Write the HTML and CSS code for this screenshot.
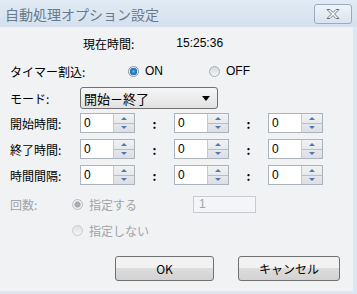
FILE: index.html
```html
<!DOCTYPE html>
<html lang="ja">
<head>
    <meta charset="UTF-8">
    <title>自動処理オプション設定</title>
    <link rel="stylesheet" href="styles.css">
</head>
<body>
    <div class="frame">
        <div class="titlebar">
            <span class="title">自動処理オプション設定</span>
            <button class="close">
                <svg width="16" height="12" viewBox="0 0 16 12">
                    <path d="M2 1.5h3l3 3 3-3h3l-4.5 4.5 4.5 4.5h-3l-3-3-3 3h-3l4.5-4.5z" fill="#fff" stroke="#6b7683" stroke-width="1"/>
                </svg>
            </button>
        </div>
        <div class="content">
            <div class="row now-row">
                <span class="now-label">現在時間:</span>
                <span class="now-time">15:25:36</span>
            </div>
            <div class="row timer-row">
                <span class="label">タイマー割込:</span>
                <span class="radio on"></span><span class="radio-text">ON</span>
                <span class="radio off second"></span><span class="radio-text">OFF</span>
            </div>
            <div class="row mode-row">
                <span class="label">モード:</span>
                <div class="select">
                    <span>開始－終了</span>
                    <span class="arrow"></span>
                </div>
            </div>
            <div class="row spin-row">
                <span class="label">開始時間:</span>
                <div class="spin"><span class="val">0</span><span class="btns"><span class="up"></span><span class="down"></span></span></div>
                <span class="colon">:</span>
                <div class="spin"><span class="val">0</span><span class="btns"><span class="up"></span><span class="down"></span></span></div>
                <span class="colon">:</span>
                <div class="spin"><span class="val">0</span><span class="btns"><span class="up"></span><span class="down"></span></span></div>
            </div>
            <div class="row spin-row">
                <span class="label">終了時間:</span>
                <div class="spin"><span class="val">0</span><span class="btns"><span class="up"></span><span class="down"></span></span></div>
                <span class="colon">:</span>
                <div class="spin"><span class="val">0</span><span class="btns"><span class="up"></span><span class="down"></span></span></div>
                <span class="colon">:</span>
                <div class="spin"><span class="val">0</span><span class="btns"><span class="up"></span><span class="down"></span></span></div>
            </div>
            <div class="row spin-row">
                <span class="label">時間間隔:</span>
                <div class="spin"><span class="val">0</span><span class="btns"><span class="up"></span><span class="down"></span></span></div>
                <span class="colon">:</span>
                <div class="spin"><span class="val">0</span><span class="btns"><span class="up"></span><span class="down"></span></span></div>
                <span class="colon">:</span>
                <div class="spin"><span class="val">0</span><span class="btns"><span class="up"></span><span class="down"></span></span></div>
            </div>
            <div class="row count-row disabled">
                <span class="count-label">回数:</span>
                <span class="radio dis-on"></span><span class="radio-text">指定する</span>
                <div class="count-box">1</div>
            </div>
            <div class="row nocount-row disabled">
                <span class="radio dis-off"></span><span class="radio-text">指定しない</span>
            </div>
            <div class="row button-row">
                <button class="btn ok">OK</button>
                <button class="btn cancel">キャンセル</button>
            </div>
        </div>
    </div>
</body>
</html>
```

FILE: styles.css
```css
body {
    margin: 0;
    width: 357px;
    height: 294px;
    overflow: hidden;
    background: #dce7f3;
    font-family: "Noto Sans CJK JP", "DejaVu Sans", sans-serif;
    font-size: 12px;
    color: #000;
}
.frame {
    width: 357px;
    height: 294px;
}
.titlebar {
    height: 27px;
    display: flex;
    align-items: center;
    justify-content: space-between;
    background: linear-gradient(#e2ebf5, #d4e0ee);
    padding: 0 5px 0 5px;
    box-sizing: border-box;
}
.title {
    font-size: 14px;
    color: #6a7a8a;
}
.close {
    width: 38px;
    height: 20px;
    margin-top: 1px;
    border: 1px solid #9aabbf;
    border-radius: 3px;
    background: linear-gradient(#eef3f9, #dae4ef);
    display: flex;
    align-items: center;
    justify-content: center;
    padding: 0;
}
.content {
    width: 353px;
    height: 264px;
    background: #f1f2f4;
    box-sizing: border-box;
    padding-top: 7px;
}
.row {
    display: flex;
    align-items: center;
}
.label {
    width: 70px;
    padding-left: 10px;
    white-space: nowrap;
}
.now-row {
    height: 18px;
}
.now-label {
    margin-left: 83px;
}
.now-time {
    margin-left: 42px;
    font-family: "Liberation Sans", sans-serif;
}
.timer-row {
    height: 18px;
    margin-top: 10px;
}
.radio {
    width: 11px;
    height: 11px;
    border-radius: 50%;
    box-sizing: border-box;
    display: inline-block;
}
.timer-row .radio.on {
    margin-left: 48px;
}
.radio.on {
    border: 1px solid #8a95a3;
    background: radial-gradient(circle, #5fc2f0 0, #1f6fb8 2.5px, #2a7cc2 3.5px, #e8ecf0 4px);
}
.radio.off {
    border: 1px solid #a6aeb8;
    background: linear-gradient(#d4d8dd, #f4f5f7);
}
.radio.second {
    margin-left: 46px;
}
.radio-text {
    margin-left: 6px;
    font-family: "Liberation Sans", "Noto Sans CJK JP", sans-serif;
}
.mode-row {
    height: 22px;
    margin-top: 7px;
}
.select {
    width: 138px;
    height: 22px;
    box-sizing: border-box;
    border: 1px solid #707070;
    border-radius: 3px;
    background: linear-gradient(#f6f6f6, #e2e2e2);
    display: flex;
    align-items: center;
    justify-content: space-between;
    padding: 0 7px 0 3px;
    font-size: 13px;
}
.arrow {
    width: 0;
    height: 0;
    border-left: 4px solid transparent;
    border-right: 4px solid transparent;
    border-top: 5px solid #000;
}
.spin-row {
    height: 20px;
    margin-top: 6px;
}
.mode-row + .spin-row {
    margin-top: 4px;
}
.spin {
    width: 55px;
    height: 20px;
    box-sizing: border-box;
    border: 1px solid #abb3bd;
    background: #fff;
    display: flex;
}
.val {
    flex: 1;
    padding-left: 3px;
    line-height: 18px;
    font-family: "Liberation Sans", sans-serif;
}
.btns {
    width: 20px;
    display: flex;
    flex-direction: column;
    border-left: 1px solid #c4cad1;
    background: linear-gradient(#f1f2f4, #dcdfe3);
}
.btns span {
    flex: 1;
    display: flex;
    align-items: center;
    justify-content: center;
}
.up::after, .down::after {
    content: "";
    border-left: 3px solid transparent;
    border-right: 3px solid transparent;
}
.up {
    border-bottom: 1px solid #b8bec6;
}
.up::after {
    border-bottom: 3px solid #4a78b8;
}
.down::after {
    border-top: 3px solid #4a78b8;
}
.colon {
    width: 39px;
    text-align: center;
    font-weight: bold;
}
.disabled {
    color: #a0a4a8;
}
.count-row {
    height: 18px;
    margin-top: 10px;
}
.count-label {
    width: 62px;
    padding-left: 10px;
}
.radio.dis-on {
    border: 1px solid #b8bdc3;
    background: radial-gradient(circle, #b0b4b8 0, #a0a4a8 2.5px, #eceef0 3.5px);
}
.radio.dis-off {
    border: 1px solid #c8ccd1;
    background: linear-gradient(#dde0e3, #f4f5f7);
    margin-left: 72px;
}
.count-box {
    margin-left: 56px;
    width: 63px;
    height: 17px;
    box-sizing: border-box;
    border: 1px solid #c6cbd1;
    background: #f4f5f6;
    padding-left: 5px;
    line-height: 15px;
    font-family: "Liberation Sans", sans-serif;
}
.nocount-row {
    height: 18px;
    margin-top: 8px;
}
.button-row {
    margin-top: 17px;
    height: 25px;
}
.btn {
    height: 25px;
    box-sizing: border-box;
    border: 1px solid #707070;
    border-radius: 3px;
    background: linear-gradient(#f2f2f2 50%, #dddddd 50%, #d2d2d2);
    font-family: "Noto Sans CJK JP", sans-serif;
    font-size: 12px;
    padding: 0;
}
.ok {
    margin-left: 115px;
    width: 99px;
}
.cancel {
    margin-left: 24px;
    width: 102px;
}
```
